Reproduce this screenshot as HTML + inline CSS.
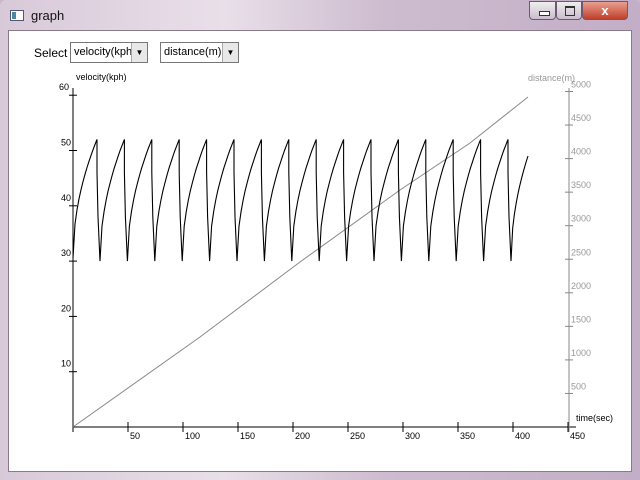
<!DOCTYPE html>
<html><head><style>
body{margin:0;width:640px;height:480px;overflow:hidden;font-family:"Liberation Sans",sans-serif;background:#c9b8cc}
.frame{position:absolute;left:0;top:0;width:640px;height:480px;background:linear-gradient(90deg,#d8c9d9 0%,#e9dfe9 35%,#cdbccf 60%,#c2aec6 100%);border-radius:6px 6px 0 0}
.title{position:absolute;left:31px;top:8px;font-size:13px;color:#111}
.icon{position:absolute;left:10px;top:10px;width:14px;height:11px;background:#fff;border:1px solid #557;box-sizing:border-box}
.icon:before{content:"";position:absolute;left:1px;top:1px;width:4px;height:7px;background:#4a8a9a}
.client{position:absolute;left:8px;top:30px;width:624px;height:442px;background:#fff;border:1px solid #8a7a8c;box-sizing:border-box}
.btn{position:absolute;top:1px;height:19px;border:1px solid #6a5a70;box-sizing:border-box;border-radius:0 0 4px 4px}
.sel{position:absolute;top:42px;height:21px;border:1px solid #777;box-sizing:border-box;font-size:11px;line-height:19px;padding-left:3px;background:#fff;overflow:hidden;white-space:nowrap}
.arr{position:absolute;right:0;top:0;width:15px;height:19px;background:#e8e8e8;border-left:1px solid #aaa;font-size:8px;text-align:center;line-height:19px}
</style></head><body>
<div class="frame"></div>
<div class="icon"></div>
<div class="title">graph</div>
<div class="btn" style="left:529px;width:27px;background:linear-gradient(#eee,#cbbccd)"><div style="position:absolute;left:9px;top:9px;width:9px;height:3px;border:1px solid #333;background:#fff"></div></div>
<div class="btn" style="left:556px;width:26px;background:linear-gradient(#eee,#cbbccd)"><div style="position:absolute;left:8px;top:4px;width:8px;height:7px;border:1px solid #333;border-top-width:2px"></div></div>
<div class="btn" style="left:582px;width:46px;background:linear-gradient(#e8a090,#c0402a);color:#fff;font-weight:bold;font-size:13px;text-align:center;line-height:17px">x</div>
<div class="client"></div>
<div style="position:absolute;left:34px;top:46px;font-size:12px">Select</div>
<div class="sel" style="left:70px;width:78px">velocity(kph<div class="arr">▼</div></div>
<div class="sel" style="left:160px;width:79px">distance(m)<div class="arr">▼</div></div>
<svg id="g" width="640" height="480" style="position:absolute;left:0;top:0" font-family="Liberation Sans, sans-serif" font-size="9"></svg>
<script>
var s='',X=function(t){return 73+t*1.1},Y=function(v){return 427-v*5.53},D=function(d){return 427-d*0.0671};
s+='<line x1="73" y1="427" x2="576" y2="427" stroke="#000"/><line x1="73" y1="88" x2="73" y2="432" stroke="#000"/>';
s+='<line x1="569" y1="88" x2="569" y2="432" stroke="#888"/>';
for(var i=1;i<=9;i++){var x=X(i*50);s+='<line x1="'+x+'" y1="422" x2="'+x+'" y2="432" stroke="#000"/><text x="'+(x+2)+'" y="439">'+(i*50)+'</text>';}
for(var v=10;v<=60;v+=10){var y=Y(v);s+='<line x1="69" y1="'+y+'" x2="77" y2="'+y+'" stroke="#000"/><text x="'+(v==60?59:61)+'" y="'+(y-5)+'">'+v+'</text>';}
for(var d=500;d<=5000;d+=500){var y=D(d);s+='<line x1="565" y1="'+y+'" x2="573" y2="'+y+'" stroke="#888"/><text x="571" y="'+(y-4)+'" fill="#999">'+d+'</text>';}
s+='<text x="76" y="80">velocity(kph)</text><text x="528" y="81" fill="#999">distance(m)</text><text x="576" y="421">time(sec)</text>';
s+='<polyline fill="none" stroke="#888" points="73,427 200,337 300,262 400,190 470,143 528,97"/>';
var p='M73,258',peak=97,per=27.4;
function rise(x0,x1,v0){var r='';for(var k=1;k<=12;k++){var u=k/12;r+=' L'+(x0+(x1-x0)*u).toFixed(1)+','+Y(v0+(52-v0)*Math.sqrt(u)).toFixed(1);}return r;}
p+=rise(73,97,30.5);
for(var k=0;k<16;k++){var px=peak+k*per;p+=' L'+px+','+Y(46)+' L'+(px+1)+','+Y(38)+' L'+(px+2)+','+Y(34)+' L'+(px+3)+','+Y(30);
var nx=px+per;if(k==15){var r='';for(var j=1;j<=10;j++){var u=j/10;r+=' L'+(px+3+(528-px-3)*u).toFixed(1)+','+Y(30+19*Math.sqrt(u)).toFixed(1);}p+=r;}else p+=rise(px+3,nx,30);}
s+='<path d="'+p+'" fill="none" stroke="#000" stroke-width="1.1"/>';
document.getElementById('g').innerHTML=s;
</script>
</body></html>
